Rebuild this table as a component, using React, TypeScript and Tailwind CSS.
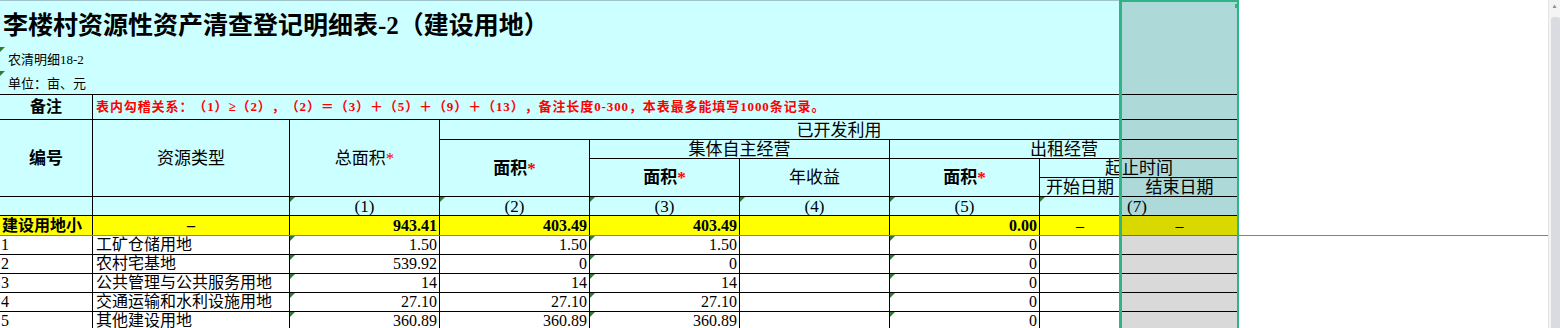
import React from "react";

const FONT = "font-['Liberation_Serif','Noto_Sans_CJK_SC',serif]";
const COLS = "grid grid-cols-[93px_197px_150px_150px_150px_150px_150px_81px_118px]";
const CELL = "relative border-r border-b border-black overflow-hidden";

function Tri() {
  return (
    <span className="absolute left-0 top-0 h-0 w-0 border-t-[5px] border-r-[5px] border-t-[#2e7d32] border-r-transparent" />
  );
}

function Star() {
  return <span className="text-[#ff0000]">*</span>;
}

interface Row {
  no: string;
  type: string;
  total: string;
  area: string;
  selfArea: string;
  income: string;
  rentArea: string;
}

const rows: Row[] = [
  { no: "1", type: "工矿仓储用地", total: "1.50", area: "1.50", selfArea: "1.50", income: "", rentArea: "0" },
  { no: "2", type: "农村宅基地", total: "539.92", area: "0", selfArea: "0", income: "", rentArea: "0" },
  { no: "3", type: "公共管理与公共服务用地", total: "14", area: "14", selfArea: "14", income: "", rentArea: "0" },
  { no: "4", type: "交通运输和水利设施用地", total: "27.10", area: "27.10", selfArea: "27.10", income: "", rentArea: "0" },
  { no: "5", type: "其他建设用地", total: "360.89", area: "360.89", selfArea: "360.89", income: "", rentArea: "0" },
];

function Head({ children, className = "" }: { children: React.ReactNode; className?: string }) {
  return (
    <div className={`${CELL} flex items-center justify-center text-[17px] leading-none ${className}`}>
      {children}
    </div>
  );
}

export default function App() {
  return (
    <div
      className={`flex h-[328px] w-[1560px] overflow-hidden bg-white text-black [text-spacing-trim:space-all] ${FONT}`}
    >
      <div className="relative w-[1548px] shrink-0">
        {/* title block */}
        <div className="flex h-[95px] w-[1239px] flex-col border-t border-b border-t-[#9fc4c9] border-b-black bg-[#ccffff]">
          <div className="flex h-[46px] items-center pl-[3px] pt-[2px] text-[25px] font-bold leading-none">
            李楼村资源性资产清查登记明细表-2（建设用地）
          </div>
          <div className="relative flex h-[24px] items-center pl-[8px] text-[13px] leading-none">
            <Tri />
            农清明细18-2
          </div>
          <div className="relative flex h-[23px] items-center pl-[8px] pt-[2px] text-[13px] leading-none">
            <Tri />
            单位：亩、元
          </div>
        </div>

        {/* remark row */}
        <div className="flex h-[25px] w-[1239px] bg-[#ccffff]">
          <div className={`${CELL} flex w-[93px] items-center justify-center text-[16px] font-bold`}>备注</div>
          <div
            className={`${CELL} flex w-[1146px] items-center pl-[3px] text-[13px] font-bold tracking-[0.9px] text-[#ff0000]`}
          >
            表内勾稽关系：（1）≥（2），（2）＝（3）＋（5）＋（9）＋（13），备注长度0-300，本表最多能填写1000条记录。
          </div>
        </div>

        {/* header grid */}
        <div className={`${COLS} w-[1239px] grid-rows-[20px_19px_19px_19px_19px] bg-[#ccffff]`}>
          <Head className="row-span-4 text-[16px] font-bold">编号</Head>
          <Head className="row-span-4">资源类型</Head>
          <Head className="row-span-4">总面积<Star /></Head>
          <Head className="col-span-6 items-end">已开发利用</Head>
          <Head className="row-span-3 font-semibold">面积<Star /></Head>
          <Head className="col-span-2 items-end">集体自主经营</Head>
          <Head className="col-span-3 items-end">出租经营</Head>
          <Head className="row-span-2 font-semibold">面积<Star /></Head>
          <Head className="row-span-2">年收益</Head>
          <Head className="row-span-2 font-semibold">面积<Star /></Head>
          <Head className="col-span-2 items-end">起止时间</Head>
          <Head className="items-end">开始日期</Head>
          <Head className="items-end">结束日期</Head>

          <Head>{""}</Head>
          <Head>{""}</Head>
          <Head className="text-[15px]"><Tri />(1)</Head>
          <Head className="text-[15px]"><Tri />(2)</Head>
          <Head className="text-[15px]"><Tri />(3)</Head>
          <Head className="text-[15px]"><Tri />(4)</Head>
          <Head className="text-[15px]"><Tri />(5)</Head>
          <Head><Tri /></Head>
          <Head className="justify-start pl-[6px] text-[15px]">(7)</Head>
        </div>

        {/* subtotal row with frozen-pane line */}
        <div className="h-[20px] w-full border-b border-[#22b573]">
          <div className={`${COLS} h-[19px] w-[1239px] bg-[#ffff00] text-[16px] font-bold leading-none`}>
            <div className="flex items-center overflow-hidden border-r border-black pl-[2px]">建设用地小</div>
            <div className="flex items-center justify-center border-r border-black">–</div>
            <div className="flex items-center justify-end border-r border-black pr-[2px]">943.41</div>
            <div className="flex items-center justify-end border-r border-black pr-[2px]">403.49</div>
            <div className="flex items-center justify-end border-r border-black pr-[2px]">403.49</div>
            <div className="border-r border-black" />
            <div className="flex items-center justify-end border-r border-black pr-[2px]">0.00</div>
            <div className="flex items-center justify-center border-r border-black font-normal">–</div>
            <div className="flex items-center justify-center border-r border-black font-normal">–</div>
          </div>
        </div>

        {/* data rows */}
        {rows.map((r) => (
          <div key={r.no} className={`${COLS} h-[19px] w-[1239px] text-[16px] leading-none`}>
            <div className={`${CELL} flex items-center pl-[1px]`}>{r.no}</div>
            <div className={`${CELL} flex items-center pl-[3px]`}>{r.type}</div>
            <div className={`${CELL} flex items-center justify-end pr-[2px]`}><Tri />{r.total}</div>
            <div className={`${CELL} flex items-center justify-end pr-[2px]`}>{r.area}</div>
            <div className={`${CELL} flex items-center justify-end pr-[2px]`}><Tri />{r.selfArea}</div>
            <div className={`${CELL} flex items-center justify-end pr-[2px]`}>{r.income}</div>
            <div className={`${CELL} flex items-center justify-end pr-[2px]`}><Tri />{r.rentArea}</div>
            <div className={CELL} />
            <div className={CELL} />
          </div>
        ))}

        {/* selected column overlay */}
        <div className="pointer-events-none absolute left-[1119px] top-0 h-full w-[120px] border-t-2 border-r-2 border-l-[3px] border-[#2fb585] bg-black/15">
          <span className="absolute right-[-1px] top-[2px] h-[4px] w-[3px] bg-[#2fb585]" />
        </div>
      </div>

      {/* vertical scrollbar */}
      <div className="flex w-[12px] shrink-0 flex-col border-l border-[#e4e4e4] bg-[#f4f4f4]">
        <div className="flex h-[17px] items-start justify-center pt-[3px] text-[6px] leading-none text-[#8a8a8a]">▲</div>
        <div className="ml-[2px] flex-1 rounded-t-[3px] bg-[#d9dbe1]" />
      </div>
    </div>
  );
}
